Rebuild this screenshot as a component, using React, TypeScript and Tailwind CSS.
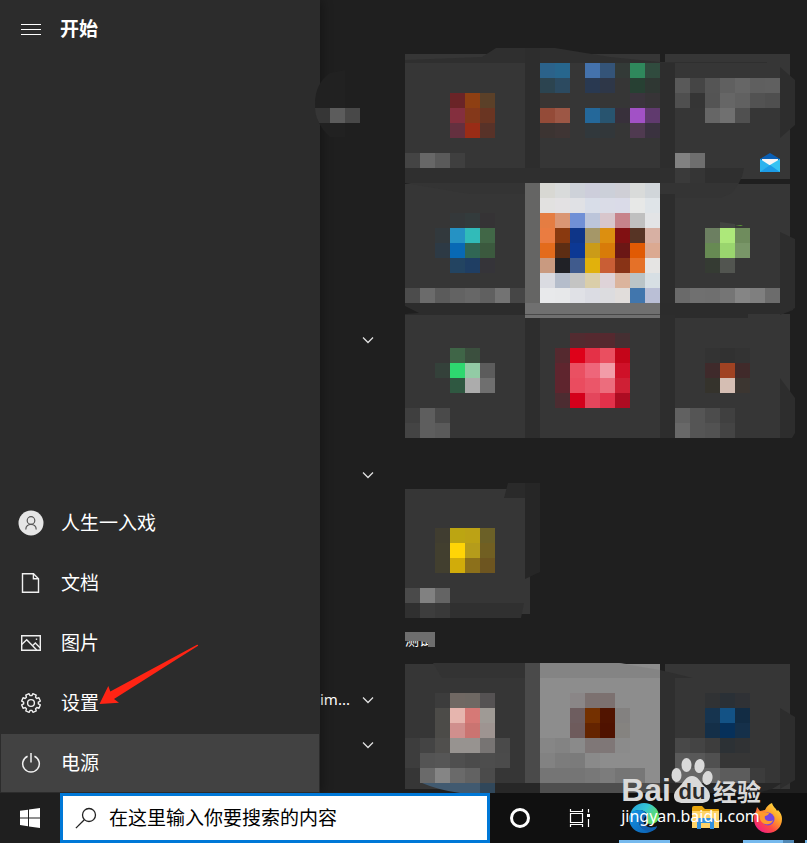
import { ReactNode } from "react"

// a run of 15px cells: x, y, then one colour per cell ("_" leaves the cell empty)
type Run = [number, number, string];

const CELL = 15;

const groupOneCells: Run[] = [
    // row 1, left
    [450, 93, "6a2427 8e3f12 5b4028"],
    [450, 108, "842f3e 84381a 6a3522"],
    [450, 123, "64303f 9a2c16 583228"],
    [405, 153, "444444 676767 5a5a5a 3f3f3f"],
    // row 1, middle
    [540, 63, "2b628a 27668d _ 4472ac 345478 333a37 2f885c 304b3e"],
    [540, 78, "2c4450 2c4a60 _ 293951 2e3748 _ 274033 2f3733"],
    [540, 93, "393533 393533 _ _ _ _ 3b343d 373437"],
    [540, 108, "944b38 9d5745 _ 24689a 28546f 38303b a251c6 603a6e"],
    [540, 123, "3c3432 3f3534 _ 31383c 32373a _ 4f3a50 3a323f"],
    // row 1, right
    [675, 78, "595959 454545 555555 606060 666666 5f5f5f 606060"],
    [675, 93, "4f4f4f 353535 545454 666666 616161 525252 4f4f4f"],
    [705, 108, "666666 707070 505050"],
    [675, 153, "818181 6e6e6e"],
    [675, 168, "3a3a3a 353535"],
    // row 2, left
    [450, 213, "34383a 333b3c 353335"],
    [435, 228, "32393d 2592c4 31bbb9 416747"],
    [435, 243, "2d3a45 0869b5 306654 3b593e"],
    [450, 258, "234461 1f3e63 353439"],
    [405, 288, "4c4c4c 6b6b6b 5b5b5b 636363 676767 606060 737373 464646"],
    // row 2, middle
    [540, 183, "d8d8d3 d9dbdb ced2d9 cdcedb ccd0d9 cfcfd6 d9dbda d1d6da"],
    [540, 198, "e2e1e0 e3e1e3 e0e1e5 d8dde8 dadce7 dadbe8 e7e8e7 dfe4e8"],
    [540, 213, "e57d42 da9674 7090d6 bcc5da d8c6cc c7838b c0c0c0 e3e4e6"],
    [540, 228, "ea7c41 89390f 0e3588 a59768 dc8f10 811012 573425 d7b0a3"],
    [540, 243, "e36b1c 5d2d13 0c3894 cb9b18 d87b09 6b1715 e15a03 dba991"],
    [540, 258, "c99a80 202126 405b8d e1b10c c95e35 883316 e57128 e5e4e3"],
    [540, 273, "dadbe1 b5bdcb c4c4c3 dacea9 ded3d8 dbb49d bac4c7 d7dfe4"],
    [540, 288, "e8e9eb e7e8ea e0e1e6 dbdce3 dcdcdf e1dddb 4176ad babfd6"],
    // row 2, right
    [705, 228, "6c7f61 ade87a 6f8c5d"],
    [705, 243, "678a53 9ad56e 799668"],
    [705, 258, "353b33 525550"],
    [675, 288, "6a6a6a 707070 6f6f6f 757575 858585 7f7f7f 6c6c6c"],
    // row 3, left
    [450, 348, "3f6547 3b4f3e"],
    [435, 363, "34413a 2ed86f 92cba5 5c5c5c"],
    [450, 378, "2f5841 acacac 6f6f6f"],
    [405, 408, "3f3f3f 5e5e5e 4a4a4a"],
    [405, 423, "444444 5e5e5e 5a5a5a"],
    // row 3, middle
    [570, 333, "522b30 55292f 55292f 452f32"],
    [555, 348, "55292f de0119 e43147 ea4f60 c40519"],
    [555, 363, "5f252e ea5062 ee667a f29ca8 cf1128"],
    [555, 378, "5f252e ea4c5f eb5669 ec6d7d cf2035"],
    [555, 393, "4c2c31 d4001b e4465c e2314a ad0c22"],
    // row 3, right
    [705, 348, "333333 313131 333333"],
    [705, 363, "3f2a2b a04222 402a2a"],
    [705, 378, "35332c d5beb3 3c3631"],
    [675, 408, "616161 555555 4c4c4c 404040"],
    [675, 423, "686868 555555 525252 444444"],
];

const groupTwoCells: Run[] = [
    [435, 528, "403d30 bca512 bca215 6b6027"],
    [435, 543, "423f2f ffd506 b59c1b 715f22"],
    [435, 558, "423f2f d1ac0a 8c701b 6d5520"],
    [405, 588, "4a4a4a 818181 646464"],
    [420, 603, "3d3d3d 393939"],
];

const groupThreeCells: Run[] = [
    [435, 693, "3c3c3c 706863 6e6863 555253"],
    [435, 708, "4c4b48 e6b5ae d67976 9f9a95"],
    [435, 723, "4c4b48 d08f8d ca7471 9e9491"],
    [405, 738, "3d3d3d 444444 504f4d 979390 979390 777473 4a4a4a"],
    [405, 753, "3d3d3d 545454 565656 4f4f4f 4b4b4b 4d4d4d 4b4b4b"],
    [420, 768, "6a6a6a 858585 6a6a6a 626262 4b4b4b"],
    [570, 693, "8a8687 7c7170 7c7170"],
    [570, 708, "6e5d5f 743000 511400 838180"],
    [570, 723, "6e5b5c 642400 4f1200 858380"],
    [540, 738, "868686 838383 8a8a8a 7f7777 7f7777 8b8b8b"],
    [540, 753, "828282 7c7c7c 7b7b7b 8a8a8a"],
    [540, 768, "757575 757575 757575 787878 7c7c7c 757575 777777"],
    [705, 693, "303234 2a3036 2f3135"],
    [705, 708, "16344f 135285 122c44"],
    [705, 723, "142f48 06305a 15304a"],
    [675, 738, "484848 444444 3d3d3d 2c3135 303234"],
    [675, 753, "5a5a5a 585858 505050"],
    [675, 768, "666666 666666 666666 5c5c5c 5c5c5c 3c3c3c"],
];

function Cells({ runs }: { runs: Run[] }) {
    return (
        <g shapeRendering="crispEdges">
            {runs.map(([x, y, colors]) =>
                colors.split(" ").map((color, i) =>
                    color === "_" ? null : (
                        <rect key={`${x}-${y}-${i}`} x={x + i * CELL} y={y} width={CELL} height={CELL} fill={`#${color}`} />
                    )
                )
            )}
        </g>
    );
}

function Tile({ label, className = "bg-[#363636]", children }: { label: string; className?: string; children?: ReactNode }) {
    return (
        <button type="button" aria-label={label} className={`relative h-[125px] w-[125px] ${className}`}>
            {children}
        </button>
    );
}

function TileGroup({ title, overlay, children }: { title?: ReactNode; overlay: ReactNode; children: ReactNode }) {
    return (
        <section>
            <div className="flex h-[50px] items-end pb-4">{title}</div>
            <div className="relative w-fit">
                <div className="grid grid-cols-[repeat(3,125px)] gap-[5px]">{children}</div>
                {overlay}
            </div>
        </section>
    );
}

function MailIcon() {
    return (
        <svg viewBox="0 0 20 19" className="absolute right-[10px] bottom-[7px] z-10 h-[19px] w-5" aria-hidden="true">
            <path d="M0 6 10 0l10 6v3H0z" fill="#0a5fb4" />
            <path d="M2 6h16v7H2z" fill="#f5f5f5" />
            <path d="M0 6v13h20z" fill="#2bb3ee" />
            <path d="M20 6v13H0l10-7z" fill="#35c3f3" />
            <path d="M0 19 10 12l10 7z" fill="#1c9be6" />
        </svg>
    );
}

function UserIcon() {
    return (
        <svg viewBox="0 0 26 26" className="h-[26px] w-[26px]" fill="none" aria-hidden="true">
            <circle cx="13" cy="13" r="12.5" fill="#e6e6e6" />
            <circle cx="13" cy="10.5" r="3.8" stroke="#555" strokeWidth="1.2" />
            <path d="M7.8 19.5c0-3.2 2.3-5.2 5.2-5.2s5.2 2 5.2 5.2" stroke="#555" strokeWidth="1.2" />
        </svg>
    );
}

function DocumentIcon() {
    return (
        <svg viewBox="0 0 22 22" className="h-[22px] w-[22px]" fill="none" stroke="#f0f0f0" strokeWidth="1.4" aria-hidden="true">
            <path d="M2.5 1.7h11l5 5v13.6h-16z" />
            <path d="M13.4 1.700v5h5" />
        </svg>
    );
}

function PictureIcon() {
    return (
        <svg viewBox="0 0 22 22" className="h-[22px] w-[22px]" fill="none" stroke="#f0f0f0" strokeWidth="1.4" aria-hidden="true">
            <path d="M1.7 3.7h18.6v14.6H1.7z" />
            <path d="m1.7 12.5 5-4.8 10 10.3M12.3 14l3-3 5 5" />
            <path d="M15.8 7.2h1.4" />
        </svg>
    );
}

function GearIcon() {
    // eight square teeth around the rim
    const points: string[] = [];
    for (let i = 0; i < 8; i++) {
        const a = (i * Math.PI) / 4;
        [[-0.27, 7.4], [-0.19, 9.5], [0.19, 9.5], [0.27, 7.4]].forEach(([d, r]) => {
            points.push(`${(11 + r * Math.cos(a + d + 0.39)).toFixed(2)},${(11 + r * Math.sin(a + d + 0.39)).toFixed(2)}`);
        });
    }
    return (
        <svg viewBox="0 0 22 22" className="h-[22px] w-[22px]" fill="none" stroke="#f0f0f0" strokeWidth="1.4" strokeLinejoin="round" aria-hidden="true">
            <polygon points={points.join(" ")} />
            <circle cx="11" cy="11" r="3.4" />
        </svg>
    );
}

function PowerIcon() {
    return (
        <svg viewBox="0 0 22 22" className="h-[22px] w-[22px]" fill="none" stroke="#f0f0f0" strokeWidth="1.5" aria-hidden="true">
            <path d="M7.6 4.2a8.3 8.3 0 1 0 6.800 0" />
            <path d="M11 1v9.5" />
        </svg>
    );
}

function ArrowMark() {
    return (
        <svg viewBox="0 0 100 61" className="pointer-events-none absolute -top-[29px] left-[99px] z-20 h-[61px] w-[100px]" aria-hidden="true">
            <path d="M98 .8c1-.4 1.6.6.7 1.2L15 55l5 3.800L.5 60 9.300 42l2 5.500z" fill="#ff2414" />
        </svg>
    );
}

const navItems = [
    { label: "人生一入戏", icon: <UserIcon /> },
    { label: "文档", icon: <DocumentIcon /> },
    { label: "图片", icon: <PictureIcon /> },
    { label: "设置", icon: <GearIcon />, marked: true },
    { label: "电源", icon: <PowerIcon />, active: true },
];

function StartRail() {
    return (
        <aside className="z-10 flex w-80 shrink-0 flex-col bg-[#2c2c2c] shadow-[2px_0_10px_rgba(0,0,0,0.35)]">
            <header className="flex h-[58px] items-center">
                <button type="button" aria-label="菜单" className="flex w-[60px] flex-col items-center gap-1 pl-[2px]">
                    <span className="h-px w-5 bg-white" />
                    <span className="h-px w-5 bg-white" />
                    <span className="h-px w-5 bg-white" />
                </button>
                <h1 className="text-[19px] font-bold">开始</h1>
            </header>
            <nav className="mt-auto">
                {navItems.map((item) => (
                    <div key={item.label} className="relative h-[60px] p-px">
                        <button type="button" className={`flex h-full w-full items-center text-[19px] ${item.active ? "bg-[#424242]" : ""}`}>
                            <span className="flex w-[60px] justify-center">{item.icon}</span>
                            {item.label}
                        </button>
                        {item.marked && <ArrowMark />}
                    </div>
                ))}
            </nav>
        </aside>
    );
}

function AppList() {
    const expandable = [7, 10, 15, 16];
    return (
        <ul className="relative w-[85px] shrink-0 pt-[2px]">
            {Array.from({ length: 17 }, (_, i) => (
                <li key={i} className="flex h-[45px] items-center justify-between pr-[31px]">
                    <span className="text-[15px]">{i === 15 ? "im..." : ""}</span>
                    {expandable.includes(i) && (
                        <button type="button" aria-label="展开">
                            <svg viewBox="0 0 12 8" className="h-2 w-3" fill="none" stroke="#e0e0e0" strokeWidth="1.3" aria-hidden="true">
                                <path d="m1 1.5 5 5 5-5" />
                            </svg>
                        </button>
                    )}
                </li>
            ))}
            <svg viewBox="315 70 45 70" className="absolute top-[70px] -left-[5px] z-20 h-[70px] w-[45px]" aria-hidden="true">
                <path d="M330 73c-10 7-15 17-15 31s5 24 15 33h15V70z" fill="#212121" />
                <path d="M315 108h15v15h-11c-2-4-4-9-4-15z" fill="#363636" />
                <path d="M330 108h15v15h-15z" fill="#5c5c5c" />
                <path d="M345 108h15v15h-15z" fill="#484848" />
            </svg>
        </ul>
    );
}

function TileBoard() {
    return (
        <div className="min-w-0 flex-1 pt-1">
            <TileGroup
                overlay={
                    <svg viewBox="405 54 385 385" className="pointer-events-none absolute top-0 left-0 h-[385px] w-[385px] overflow-visible" aria-hidden="true">
                        <path d="M405 60 482 57 496 48h59l55 9 50 5h107v1H405z" fill="#2f2f2f" />
                        <path d="M525 48h15v135h-15zM525 318h15v121h-15zM660 63h15v376h-15z" fill="#2d2d2d" />
                        <path d="M405 168h339q-1 8-5 15H405z" fill="#2f2f2f" />
                        <path d="M405 183h334l-7 10-12 5h-45v-4H470z" fill="#343434" />
                        <path d="M525 183h15v120h-15z" fill="#656564" />
                        <path d="M405 303h390l-2 7-10 4h-35v4H675v-3H405z" fill="#2c2c2c" />
                        <path d="M525 303h135v15H525z" fill="#707070" />
                        <path d="M525 314h135v1H525z" fill="#494949" />
                        <path d="M405 306l14 7-14 1z" fill="#1f1f1f" />
                        <path d="m780 67 15 13v45l-15 13zM780 232l15 7v69l-15 7zM780 378l15 20v35l-3 5h-12z" fill="#2d2d2d" />
                        <path d="M720 222l15 2v4h-15z" fill="#424441" />
                        <path d="M735 225h8l-2 1z" fill="#5b9b35" />
                        <path d="M405 438h390v1H405z" fill="#1f1f1f" />
                        <Cells runs={groupOneCells} />
                    </svg>
                }
            >
                <Tile label="磁贴 1" />
                <Tile label="磁贴 2" />
                <Tile label="邮件"><MailIcon /></Tile>
                <Tile label="磁贴 4" />
                <Tile label="磁贴 5" />
                <Tile label="磁贴 6" />
                <Tile label="磁贴 7" />
                <Tile label="磁贴 8" />
                <Tile label="磁贴 9" />
            </TileGroup>

            <TileGroup
                overlay={
                    <svg viewBox="405 489 385 125" className="pointer-events-none absolute top-0 left-0 h-[125px] w-[385px] overflow-visible" aria-hidden="true">
                        <path d="M508 483h32v15h-36z" fill="#2a2a2a" />
                        <path d="M525 483h15v89l-15 7z" fill="#262626" />
                        <path d="M405 603h119l-3 15H405z" fill="#303030" />
                        <Cells runs={groupTwoCells} />
                    </svg>
                }
            >
                <Tile label="磁贴 10" />
            </TileGroup>

            <TileGroup
                title={
                    <h2 className="relative text-[14px] leading-4">
                        测试
                        <svg viewBox="0 0 30 15" className="absolute top-0 left-0 h-[15px] w-[30px]" aria-hidden="true">
                            <path d="M0 0h30v15h-7v-4l-8-2H0z" fill="#6e6e6e" />
                        </svg>
                    </h2>
                }
                overlay={
                    <svg viewBox="405 664 385 125" className="pointer-events-none absolute top-0 left-0 h-[125px] w-[385px] overflow-visible" aria-hidden="true">
                        <path d="M433 663h92v15h-83z" fill="#333" />
                        <path d="M525 663h15v120h-15z" fill="#4a4a4a" />
                        <path d="M540 663h78l42 5v115H540z" fill="#8d8d8d" />
                        <path d="M540 663h78l42 7v8H540z" fill="#848484" />
                        <path d="M660 670l33 8h-18v105h-15z" fill="#2f2f2f" />
                        <path d="m780 708 15 9v63l-15 9z" fill="#2d2d2d" />
                        <path d="M422 783h58v10h-20q-22-3-38-10z" fill="#415a70" />
                        <path d="M480 783h15v10h-15z" fill="#30475a" />
                        <path d="M495 783h45v10h-45zM660 783h122l-10 6-15 4h-97z" fill="#272727" />
                        <path d="M540 783h120v10H540z" fill="#4e4e4e" />
                        <Cells runs={groupThreeCells} />
                    </svg>
                }
            >
                <Tile label="磁贴 11" />
                <Tile label="磁贴 12" className="bg-[#8d8d8d]" />
                <Tile label="磁贴 13" />
            </TileGroup>
        </div>
    );
}

function EdgeIcon() {
    return (
        <svg viewBox="0 0 30 30" className="h-[30px] w-[30px]" aria-hidden="true">
            <defs>
                <linearGradient id="edge-top" x1="0" y1="0" x2="1" y2=".5">
                    <stop offset="0" stopColor="#229fdc" />
                    <stop offset=".55" stopColor="#35c6d6" />
                    <stop offset="1" stopColor="#63e05a" />
                </linearGradient>
                <linearGradient id="edge-base" x1="0" y1="0" x2="1" y2="1">
                    <stop offset="0" stopColor="#1497e8" />
                    <stop offset="1" stopColor="#0b5cae" />
                </linearGradient>
            </defs>
            <path d="M1 13C2 5 8 0 15 0c8 0 15 6 15 13 0 5-4 8-8 8-3 0-5-1-5-2s2-2 2-5c0-4-4-7-9-7C6 7 3 9 1 13z" fill="url(#edge-top)" />
            <path d="M0 15c0-5 4-8 10-8 4 0 7 2 8 5-5-1-8 3-8 7 0 5 5 8 10 8 3 0 5-1 7-3-2 4-7 6-12 6C7 30 0 24 0 15z" fill="url(#edge-base)" />
            <path d="M18 12c-6-1-9 3-8 8 1 6 7 9 13 8 3-1 5-3 5-5-8 4-15-1-13-6 0-2 1-3 3-5z" fill="#1160ae" />
        </svg>
    );
}

function ExplorerIcon() {
    return (
        <svg viewBox="0 0 28 24" className="h-6 w-7" aria-hidden="true">
            <path d="M0 2q0-2 2-2h8l3 3h13q1 0 1 1v3H0z" fill="#e8a50c" />
            <path d="M0 5h27v17H0z" fill="#ffd368" />
            <path d="M5 23V14q0-2 2-2h13q2 0 2 2v9h-4v-6H9v6z" fill="#3391de" />
        </svg>
    );
}

function FirefoxIcon() {
    return (
        <svg viewBox="0 0 30 30" className="h-[30px] w-[30px]" aria-hidden="true">
            <defs>
                <linearGradient id="fox" x1="1" y1="0" x2=".2" y2="1">
                    <stop offset="0" stopColor="#fff34a" />
                    <stop offset=".4" stopColor="#ffa52b" />
                    <stop offset=".7" stopColor="#ff4a43" />
                    <stop offset="1" stopColor="#f1198a" />
                </linearGradient>
            </defs>
            <path d="M19 0c1 4 4 5 5 8l1-1c3 3 4 6 4 9 0 8-6 14-14 14S1 24 1 16c0-3 0-5 2-8l1-4 3 4 5-1c2-4 4-6 7-7z" fill="url(#fox)" />
            <circle cx="15" cy="16" r="6.5" fill="#7646df" />
            <path d="M3 9c4-1 7 0 9 1h4c0 2-3 3-4 3-1 3 1 5 4 5 2 0 3 0 4-1-1 4-5 5-8 4-4-1-6-5-5-8z" fill="#ff9a2c" />
        </svg>
    );
}

function TaskbarApp({ label, underline, children }: { label: string; underline?: ReactNode; children?: ReactNode }) {
    return (
        <button type="button" aria-label={label} className="relative flex h-full w-[62px] shrink-0 items-center justify-center">
            {children}
            {underline}
        </button>
    );
}

function Taskbar() {
    return (
        <footer className="z-10 flex h-[50px] overflow-hidden bg-[#101010]">
            <button type="button" aria-label="开始" className="flex w-[60px] shrink-0 items-center justify-center bg-[#1f1f1f]">
                <svg viewBox="0 0 20 20" className="h-5 w-5" fill="#fff" aria-hidden="true">
                    <path d="M0 2.8 8 1.7v7.7H0zM9 1.6 20 0v9.4H9zM0 10.4h8v7.8l-8-1.1zM9 10.4h11V20L9 18.4z" />
                </svg>
            </button>
            <label className="flex w-[430px] shrink-0 items-center border-[3px] border-[#0078d7] bg-white">
                <svg viewBox="0 0 22 22" className="mx-3 h-[22px] w-[22px] shrink-0" fill="none" stroke="#222" strokeWidth="1.3" aria-hidden="true">
                    <circle cx="14" cy="8" r="6.5" />
                    <path d="m9.3 12.7-8.4 8.4" />
                </svg>
                <input
                    type="text"
                    aria-label="搜索"
                    placeholder="在这里输入你要搜索的内容"
                    className="min-w-0 flex-1 text-[19px] text-black outline-none placeholder:text-black"
                />
            </label>
            <button type="button" aria-label="Cortana" className="flex w-[60px] shrink-0 items-center justify-center">
                <span className="h-5 w-5 rounded-full border-[3px] border-white" />
            </button>
            <button type="button" aria-label="任务视图" className="flex w-[60px] shrink-0 items-center justify-center">
                <svg viewBox="0 0 22 20" className="h-5 w-[22px]" fill="none" stroke="#fff" strokeWidth="1.2" aria-hidden="true">
                    <path d="M1.5 5.5h12v9h-12zM1.5 1v2.5h12V1M1.5 19v-2.5h12V19M19.5 1v3.5M19.5 11v8" />
                    <path d="M18 6h3v3h-3z" fill="#fff" stroke="none" />
                </svg>
            </button>
            <div className="ml-[3px] flex">
                <TaskbarApp label="Edge" underline={<span className="absolute bottom-0 left-[6px] h-[3px] w-[51px] bg-[#76b9ed]" />}>
                    <EdgeIcon />
                </TaskbarApp>
                <TaskbarApp label="文件资源管理器">
                    <ExplorerIcon />
                </TaskbarApp>
                <TaskbarApp
                    label="Firefox"
                    underline={
                        <span className="absolute bottom-0 left-[6px] flex h-[3px] w-[51px] bg-[#5188b5]">
                            <span className="w-10 bg-[#76b9ed]" />
                        </span>
                    }
                >
                    <FirefoxIcon />
                </TaskbarApp>
                <TaskbarApp label="更多" underline={<span className="absolute bottom-0 left-[6px] h-[3px] w-[51px] bg-[#76b9ed]" />} />
            </div>
        </footer>
    );
}

function Watermark() {
    return (
        <div className="pointer-events-none absolute right-[46px] bottom-[17px] z-30 text-[#d9d9d9]">
            <div className="flex items-end pb-[2px]">
                <span className="font-['Liberation_Sans'] text-[32px] leading-[28px] font-bold">Bai</span>
                <span className="relative h-[46px] w-[42px]">
                    <svg viewBox="0 0 42 46" className="h-[46px] w-[42px]" fill="#d9d9d9" aria-hidden="true">
                        <ellipse cx="5.5" cy="17" rx="5" ry="7" />
                        <ellipse cx="15.5" cy="7" rx="5" ry="7" />
                        <ellipse cx="28.5" cy="8" rx="5" ry="7" transform="rotate(8 28.5 8)" />
                        <ellipse cx="36.5" cy="20" rx="5" ry="7" transform="rotate(10 36.5 20)" />
                        <path d="M21 18c6 0 8 6 12 10 4 3 6 6 6 10 0 5-4 7-9 7H12c-5 0-9-2-9-7 0-4 3-7 6-10 4-4 6-10 12-10z" />
                    </svg>
                    <span className="absolute inset-x-0 bottom-0 text-center font-['Liberation_Sans'] text-[22px] leading-6 font-bold text-[#2b2b2b]">du</span>
                </span>
                <span className="font-['Noto_Sans_CJK_SC',sans-serif] text-[24px] leading-[26px] font-bold">经验</span>
            </div>
            <div className="text-[16px] leading-[20px] text-white">jingyan.baidu.com</div>
        </div>
    );
}

export default function App() {
    return (
        <div className="relative flex min-h-screen flex-col overflow-hidden bg-[#1f1f1f] font-['Noto_Sans','Noto_Sans_CJK_SC',sans-serif] text-white">
            <main className="flex flex-1">
                <StartRail />
                <AppList />
                <TileBoard />
            </main>
            <Taskbar />
            <Watermark />
        </div>
    );
}
